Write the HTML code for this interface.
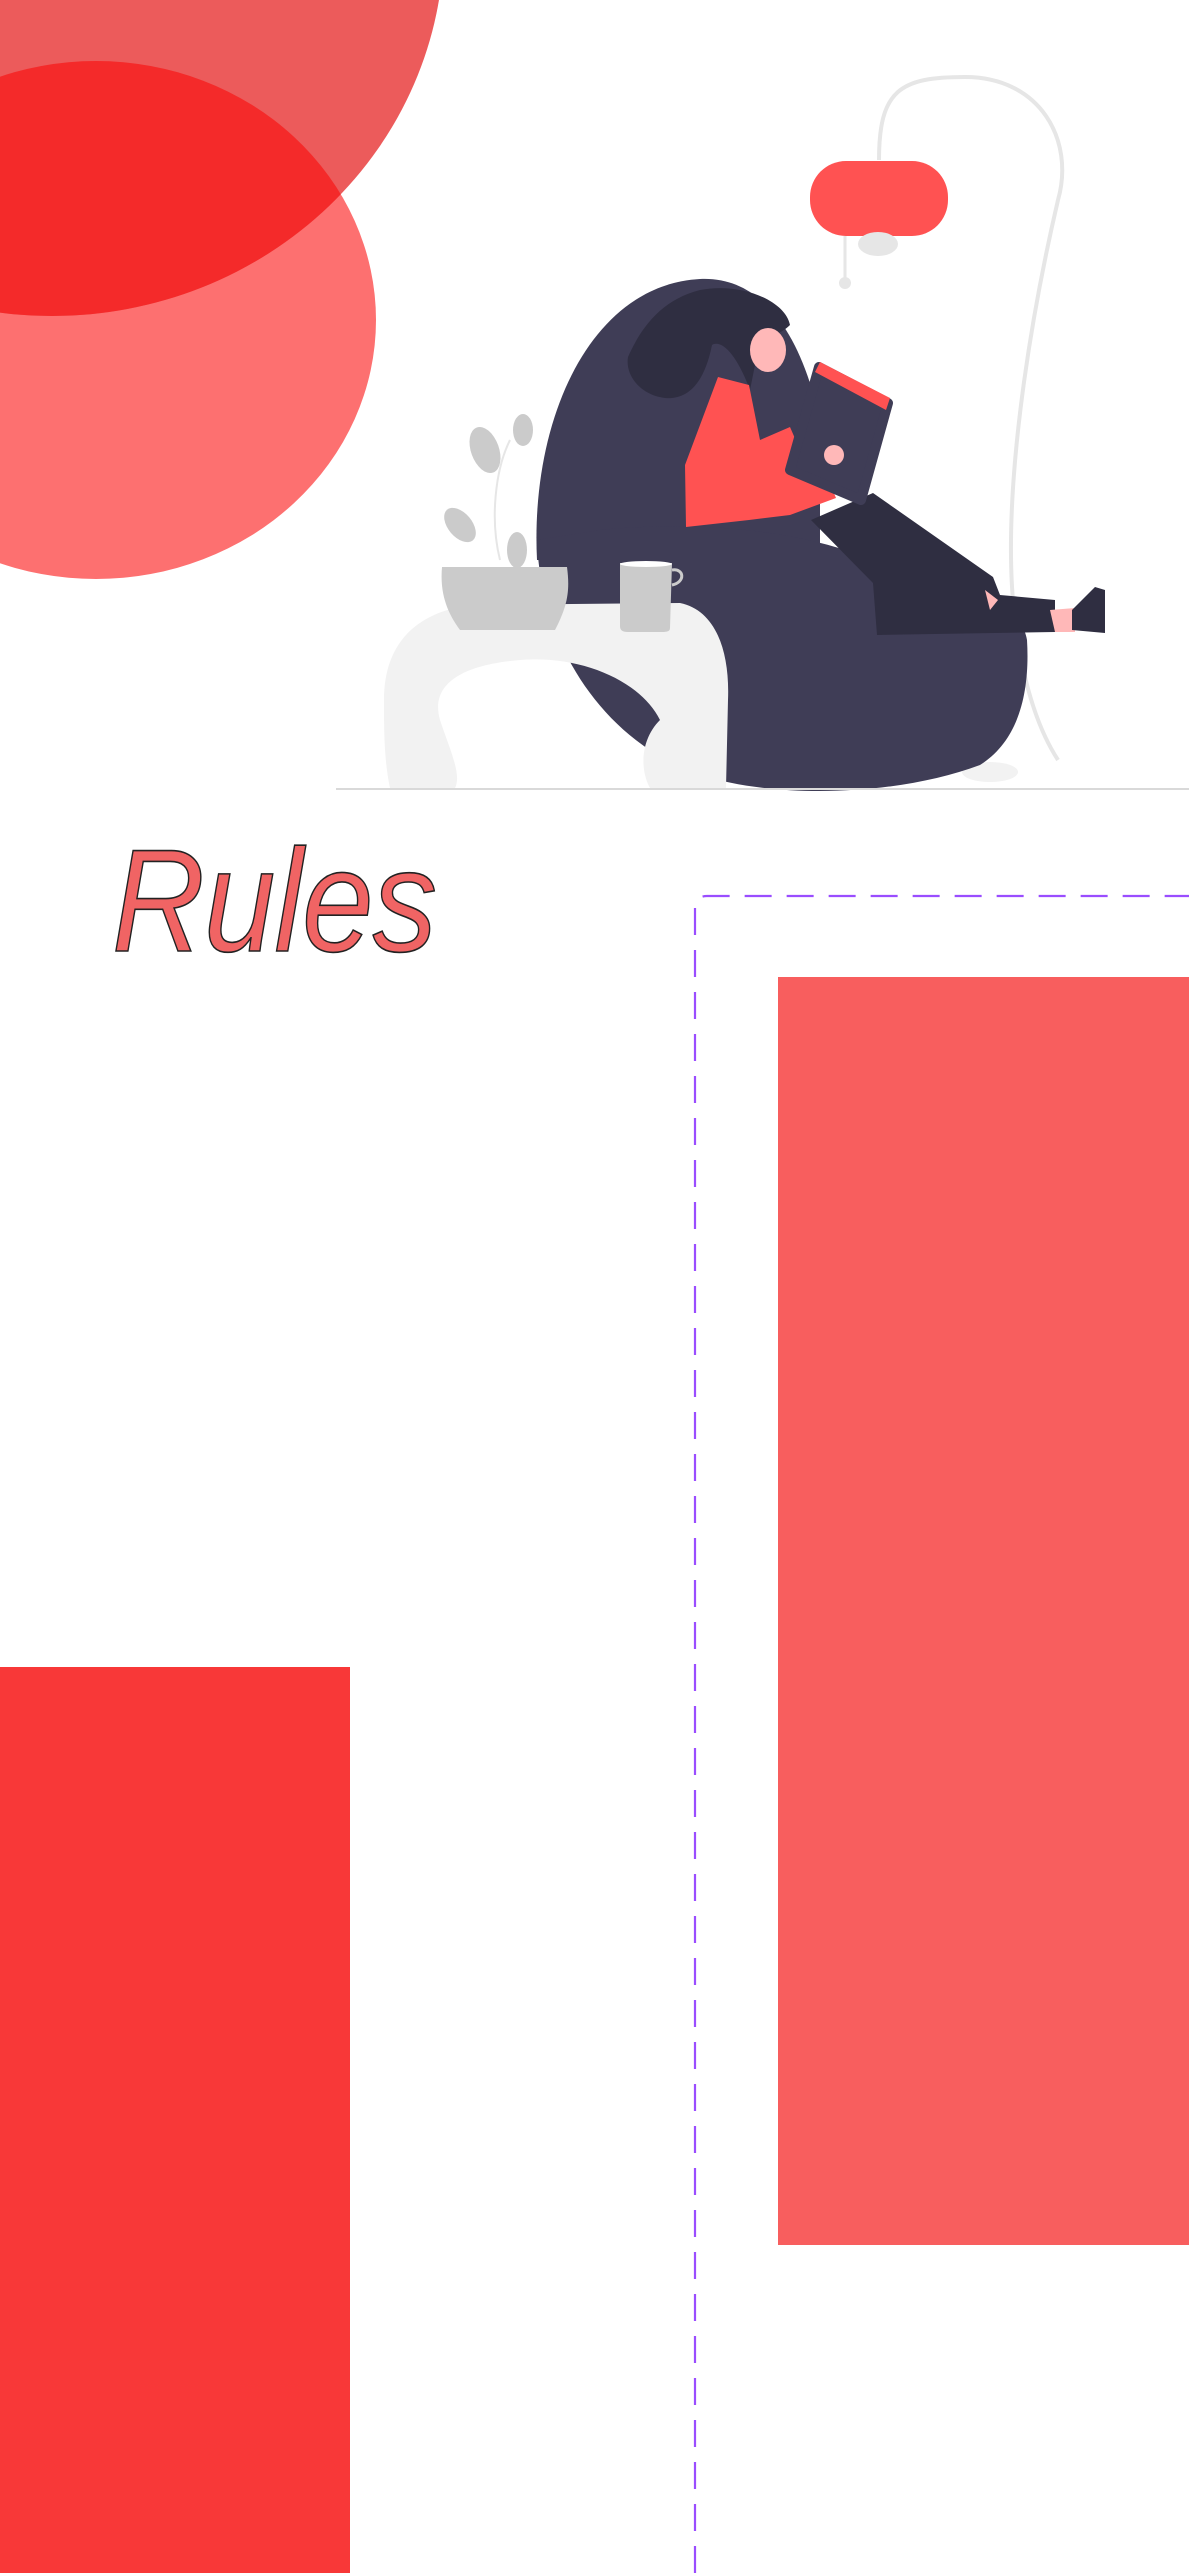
<!DOCTYPE html>
<html><head><meta charset="utf-8"><style>
html,body{margin:0;padding:0;background:#fff;}
body{width:1189px;height:2573px;position:relative;overflow:hidden;font-family:"Liberation Sans",sans-serif;}
.abs{position:absolute;}
#rules{left:112px;top:828px;font-size:146px;font-style:italic;color:#f06464;-webkit-text-stroke:1.6px #222;line-height:1;transform:scaleX(0.88);transform-origin:left top;letter-spacing:-1px;}
</style></head><body>
<svg class="abs" style="left:0;top:0" width="1189" height="800" viewBox="0 0 1189 800">
<defs><clipPath id="cc"><ellipse cx="96" cy="320" rx="280" ry="259"/></clipPath></defs>
<ellipse cx="96" cy="320" rx="280" ry="259" fill="#fd7070"/>
<ellipse cx="52" cy="-60" rx="392" ry="376" fill="#ec5b5b"/>
<ellipse cx="52" cy="-60" rx="392" ry="376" fill="#f42a2a" clip-path="url(#cc)"/>
<!-- lamp -->
<path d="M879 160 C879 90 900 77 965 77 C1040 77 1075 140 1058 200 C1030 320 1000 500 1015 620 C1025 700 1045 740 1058 760" fill="none" stroke="#e6e6e6" stroke-width="4"/>
<rect x="810" y="161" width="138" height="75" rx="36" fill="#ff5252"/>
<ellipse cx="878" cy="244" rx="20" ry="12" fill="#e6e6e6"/>
<line x1="845" y1="236" x2="845" y2="280" stroke="#e6e6e6" stroke-width="3"/>
<circle cx="845" cy="283" r="6" fill="#e6e6e6"/>
<ellipse cx="990" cy="772" rx="28" ry="10" fill="#f2f2f2"/>
<!-- chair -->
<path d="M537 560 C530 420 590 285 700 279 C760 276 800 330 820 420 L820 560 Z" fill="#3f3d56"/>
<path d="M537 540 C540 640 600 740 700 775 C780 800 900 795 980 765 C1020 740 1030 690 1027 640 C1020 600 960 560 873 560 C800 530 700 520 600 530 Z" fill="#3f3d56"/>
<!-- hair -->
<path d="M628 357 C640 330 660 300 700 290 C740 282 785 300 790 325 C780 335 770 335 760 340 L750 390 C735 350 720 340 712 345 C705 380 690 400 665 398 C640 395 625 375 628 357 Z" fill="#2f2e41"/>
<ellipse cx="768" cy="350" rx="18" ry="22" fill="#ffb8b8"/>
<!-- legs -->
<path d="M811 520 L873 493 L993 577 L1000 595 L1055 600 L1055 632 L877 635 L873 583 Z" fill="#2f2e41"/>
<path d="M985 590 L998 600 L990 610 Z" fill="#ffb8b8"/>
<path d="M1050 610 L1075 608 L1075 632 L1055 632 Z" fill="#ffb8b8"/>
<path d="M1072 610 L1095 587 L1105 590 L1105 633 L1072 630 Z" fill="#2f2e41"/>
<!-- shirt -->
<path d="M686 527 L685 465 L718 377 L749 385 L760 440 L790 427 L800 450 L823 467 L836 498 L790 515 L749 520 Z" fill="#ff5252"/>
<!-- tablet -->
<path d="M819 367 L888 403 L861 500 L790 470 Z" fill="#3f3d56" stroke="#3f3d56" stroke-width="10" stroke-linejoin="round"/>
<path d="M815 372 L820 362 L890 398 L886 410 Z" fill="#ff5252"/>
<circle cx="834" cy="455" r="10" fill="#ffb8b8"/>
<!-- plant -->
<path d="M500 560 C490 520 495 470 510 440" fill="none" stroke="#e6e6e6" stroke-width="2"/>
<ellipse cx="485" cy="450" rx="14" ry="24" fill="#cbcbcb" transform="rotate(-20 485 450)"/>
<ellipse cx="523" cy="430" rx="10" ry="16" fill="#cbcbcb"/>
<ellipse cx="460" cy="525" rx="12" ry="20" fill="#cbcbcb" transform="rotate(-40 460 525)"/>
<ellipse cx="517" cy="550" rx="10" ry="18" fill="#cbcbcb"/>
<!-- table -->
<path d="M384 700 C384 640 420 612 470 605 L680 603 C715 610 730 650 728 700 L726 788 L650 788 C640 770 640 740 660 720 C640 680 580 655 520 660 C460 665 430 685 440 720 C450 750 462 775 455 788 L390 788 C384 760 384 730 384 700 Z" fill="#f2f2f2"/>
<path d="M442 567 L567 567 C570 590 568 605 555 630 L460 630 C445 610 440 590 442 567 Z" fill="#cbcbcb"/>
<path d="M620 563 L672 563 L670 628 C670 632 666 632 660 632 L628 632 C622 632 620 630 620 626 Z" fill="#cbcbcb"/>
<path d="M672 570 C684 568 686 582 672 585" fill="none" stroke="#cbcbcb" stroke-width="3"/>
<ellipse cx="646" cy="564" rx="26" ry="3" fill="#fff"/>
<line x1="336" y1="789" x2="1189" y2="789" stroke="#d9d9d9" stroke-width="2"/>
</svg>
<div id="rules" class="abs">Rules</div>
<svg class="abs" style="left:0;top:880px" width="1189" height="1693">
<path d="M695 1693 L695 28 Q695 16 707 16 L1189 16" fill="none" stroke="#9a4dff" stroke-width="2.2" stroke-dasharray="27 15"/>
</svg>
<div class="abs" style="left:778px;top:977px;width:411px;height:1268px;background:#f85e5e"></div>
<div class="abs" style="left:0;top:1667px;width:350px;height:906px;background:#f83838"></div>
</body></html>
